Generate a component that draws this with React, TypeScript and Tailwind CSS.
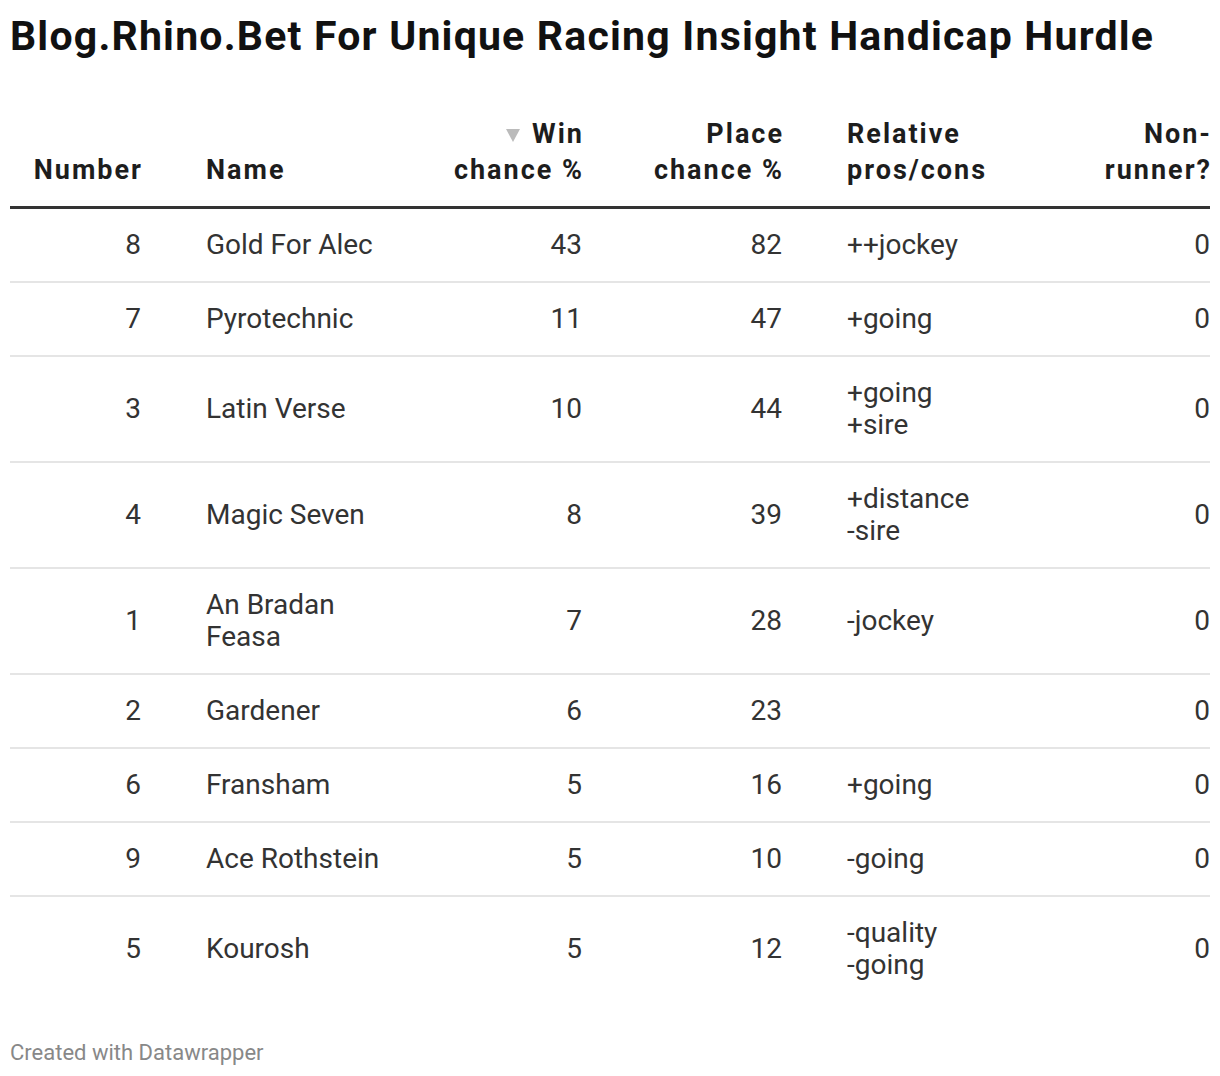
import React from "react";

type Row = { n: string; name: string[]; win: string; place: string; rel: string[]; nr: string };

const rows: Row[] = [
  { n: "8", name: ["Gold For Alec"], win: "43", place: "82", rel: ["++jockey"], nr: "0" },
  { n: "7", name: ["Pyrotechnic"], win: "11", place: "47", rel: ["+going"], nr: "0" },
  { n: "3", name: ["Latin Verse"], win: "10", place: "44", rel: ["+going", "+sire"], nr: "0" },
  { n: "4", name: ["Magic Seven"], win: "8", place: "39", rel: ["+distance", "-sire"], nr: "0" },
  { n: "1", name: ["An Bradan", "Feasa"], win: "7", place: "28", rel: ["-jockey"], nr: "0" },
  { n: "2", name: ["Gardener"], win: "6", place: "23", rel: [], nr: "0" },
  { n: "6", name: ["Fransham"], win: "5", place: "16", rel: ["+going"], nr: "0" },
  { n: "9", name: ["Ace Rothstein"], win: "5", place: "10", rel: ["-going"], nr: "0" },
  { n: "5", name: ["Kourosh"], win: "5", place: "12", rel: ["-quality", "-going"], nr: "0" },
];

const Lines = ({ lines }: { lines: string[] }) => (
  <>
    {lines.map((l, i) => (
      <div key={i}>{l}</div>
    ))}
  </>
);

export default function App() {
  return (
    <div
      className="bg-white w-[1220px] min-h-[1076px] px-[10px] text-[#333333]"
      style={{ fontFamily: "Roboto, 'Liberation Sans', sans-serif" }}
    >
      <h1 className="pt-[10px] text-[41px] leading-[52px] font-bold tracking-[1.2px] text-[#111111]">
        Blog.Rhino.Bet For Unique Racing Insight Handicap Hurdle
      </h1>

      <div className="mt-[54px] w-[1200px]">
        {/* header */}
        <div className="grid grid-cols-[131px_255px_186px_200px_268px_160px] items-end border-b-[3px] border-[#333333] pb-[18px] text-[27px] leading-[36px] font-bold tracking-[2px] text-[#1d1d1d]">
          <div className="text-right mr-[-2px]">Number</div>
          <div className="pl-[65px]">Name</div>
          <div className="text-right mr-[-2px]">
            <div className="flex items-center justify-end gap-[12px]">
              <svg width="14" height="13" viewBox="0 0 14 13" className="mt-[2px]">
                <polygon points="0,0 14,0 7,13" fill="#bbbbbb" />
              </svg>
              <span>Win</span>
            </div>
            <div>chance %</div>
          </div>
          <div className="text-right mr-[-2px]">
            <div>Place</div>
            <div>chance %</div>
          </div>
          <div className="pl-[65px]">
            <div>Relative</div>
            <div>pros/cons</div>
          </div>
          <div className="text-right mr-[-2px]">
            <div>Non-</div>
            <div>runner?</div>
          </div>
        </div>

        {/* body */}
        {rows.map((r, i) => (
          <div
            key={i}
            className={`grid grid-cols-[131px_255px_186px_200px_268px_160px] items-center py-[20px] text-[28px] leading-[32px] ${
              i < rows.length - 1 ? "border-b-2 border-[#e5e5e5]" : ""
            }`}
          >
            <div className="text-right">{r.n}</div>
            <div className="pl-[65px]">
              <Lines lines={r.name} />
            </div>
            <div className="text-right">{r.win}</div>
            <div className="text-right">{r.place}</div>
            <div className="pl-[65px]">
              <Lines lines={r.rel} />
            </div>
            <div className="text-right">{r.nr}</div>
          </div>
        ))}
      </div>

      <div className="mt-[38px] text-[22px] leading-[28px] text-[#888888]">Created with Datawrapper</div>
    </div>
  );
}
